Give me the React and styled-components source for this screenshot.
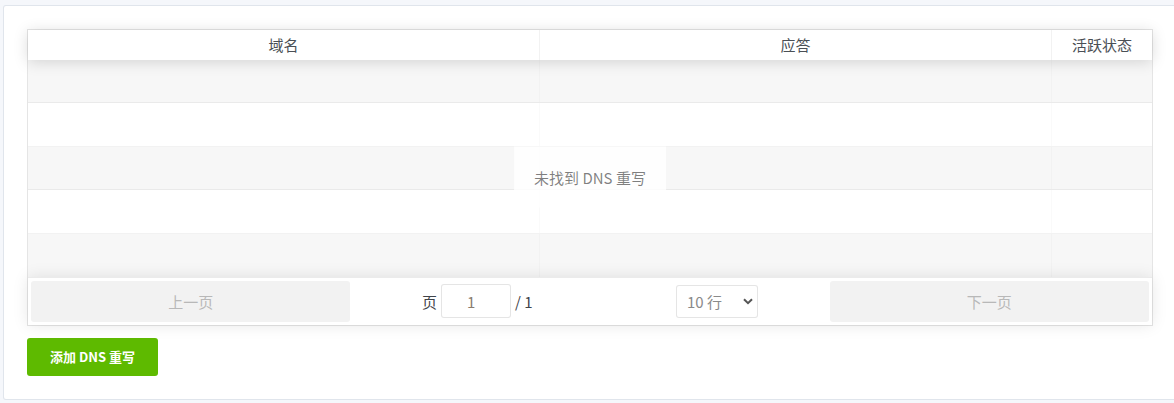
import React from "react";
import styled, { createGlobalStyle } from "styled-components";

const Global = createGlobalStyle`
  html, body {
    margin: 0;
    padding: 0;
    background: #f5f7fb;
    overflow: hidden;
  }
  body {
    font-family: "Noto Sans CJK SC", "Noto Sans", sans-serif;
    font-size: 15px;
    color: #495057;
  }
  * { box-sizing: border-box; }
`;

const Card = styled.div`
  width: 1174px;
  margin: 5px 0 0 3px;
  background: #fff;
  border: 1px solid rgba(0, 40, 100, 0.12);
  border-radius: 3px;
`;

const CardBody = styled.div`
  padding: 23px 23px 23px 23px;
`;

const Table = styled.div`
  position: relative;
  display: flex;
  flex-direction: column;
  border: 1px solid rgba(0, 0, 0, 0.1);
`;

const Head = styled.div`
  position: relative;
  z-index: 2;
  display: flex;
  height: 30px;
  background: #fff;
  box-shadow: 0 2px 15px 0 rgba(0, 0, 0, 0.15);
`;

const HeadCell = styled.div`
  flex: ${(p) => (p.$w ? `0 0 ${p.$w}px` : "1 1 0")};
  display: flex;
  align-items: center;
  justify-content: center;
  line-height: 20px;
  padding: 5px;
  color: #4a4f55;
  border-right: ${(p) => (p.$last ? "none" : "1px solid rgba(0,0,0,0.05)")};
`;

const Body = styled.div`
  display: flex;
  flex-direction: column;
`;

const Row = styled.div`
  display: flex;
  height: 43.4px;
  background: ${(p) => (p.$odd ? "#f7f7f7" : "#fff")};
  border-bottom: ${(p) => (p.$last ? "none" : "1px solid rgba(0,0,0,0.05)")};
`;

const Cell = styled.div`
  flex: ${(p) => (p.$w ? `0 0 ${p.$w}px` : "1 1 0")};
  border-right: ${(p) => (p.$last ? "none" : "1px solid rgba(0,0,0,0.02)")};
`;

const NoData = styled.div`
  position: absolute;
  left: 50%;
  top: 50%;
  transform: translate(-50%, -50%);
  z-index: 1;
  padding: 20px;
  line-height: 21px;
  background: rgba(255, 255, 255, 0.8);
  color: rgba(0, 0, 0, 0.5);
  white-space: nowrap;
`;

const Pagination = styled.div`
  position: relative;
  z-index: 1;
  display: flex;
  align-items: stretch;
  padding: 3px;
  background: #fff;
  border-top: 1px solid rgba(0, 0, 0, 0.08);
  box-shadow: 0 0 15px 0 rgba(0, 0, 0, 0.1);
`;

const Side = styled.div`
  flex: 1 1 0;
  display: flex;
`;

const PageButton = styled.button`
  flex: 1;
  height: 41px;
  border: none;
  border-radius: 3px;
  background: #f2f2f2;
  color: #b8b8b8;
  font-family: inherit;
  font-size: 15px;
  cursor: default;
`;

const Center = styled.div`
  flex: 1.5 1 0;
  display: flex;
  align-items: center;
  justify-content: space-around;
`;

const PageInfo = styled.div`
  display: flex;
  align-items: center;
  gap: 4px;
  margin: 3px 10px;
  white-space: nowrap;
  color: #3f444a;
`;

const PageInput = styled.input`
  width: 70px;
  height: 34px;
  border: 1px solid rgba(0, 0, 0, 0.1);
  border-radius: 3px;
  background: #fff;
  text-align: center;
  font-family: inherit;
  font-size: 15px;
  color: #8a7d70;
  padding: 0 10px 0 0;
  outline: none;
`;

const SelectWrap = styled.div`
  position: relative;
  margin: 3px 10px;
  width: 82px;
  height: 33px;
`;

const Select = styled.select`
  appearance: none;
  width: 100%;
  height: 100%;
  border: 1px solid rgba(0, 0, 0, 0.1);
  border-radius: 3px;
  background: #fff;
  padding: 0 0 0 10px;
  font-family: inherit;
  font-size: 15px;
  color: #8a8a8a;
  outline: none;
`;

const Chevron = styled.svg`
  position: absolute;
  right: 5px;
  top: 13px;
  width: 10px;
  height: 7px;
  pointer-events: none;
`;

const AddButton = styled.button`
  margin-top: 12px;
  height: 38px;
  padding: 0 23px;
  border: none;
  border-radius: 3px;
  background: #5eba00;
  color: #fff;
  font-family: inherit;
  font-size: 13px;
  font-weight: 700;
`;

const cols = [{ label: "域名" }, { label: "应答" }, { label: "活跃状态", w: 100 }];

export default function App() {
  const rows = [0, 1, 2, 3, 4];
  return (
    <>
      <Global />
      <Card>
        <CardBody>
          <Table>
            <Head>
              {cols.map((c, i) => (
                <HeadCell key={c.label} $w={c.w} $last={i === cols.length - 1}>
                  {c.label}
                </HeadCell>
              ))}
            </Head>
            <Body>
              {rows.map((r) => (
                <Row key={r} $odd={r % 2 === 0} $last={r === rows.length - 1}>
                  {cols.map((c, i) => (
                    <Cell key={c.label} $w={c.w} $last={i === cols.length - 1} />
                  ))}
                </Row>
              ))}
            </Body>
            <Pagination>
              <Side>
                <PageButton disabled>上一页</PageButton>
              </Side>
              <Center>
                <PageInfo>
                  页 <PageInput type="text" defaultValue="1" /> / 1
                </PageInfo>
                <SelectWrap>
                  <Select defaultValue="10">
                    <option value="10">10 行</option>
                    <option value="20">20 行</option>
                  </Select>
                  <Chevron viewBox="0 0 10 7">
                    <path d="M1 1.2 L5 5.2 L9 1.2" fill="none" stroke="#555" strokeWidth="2" />
                  </Chevron>
                </SelectWrap>
              </Center>
              <Side>
                <PageButton disabled>下一页</PageButton>
              </Side>
            </Pagination>
            <NoData>未找到 DNS 重写</NoData>
          </Table>
          <AddButton>添加 DNS 重写</AddButton>
        </CardBody>
      </Card>
    </>
  );
}
